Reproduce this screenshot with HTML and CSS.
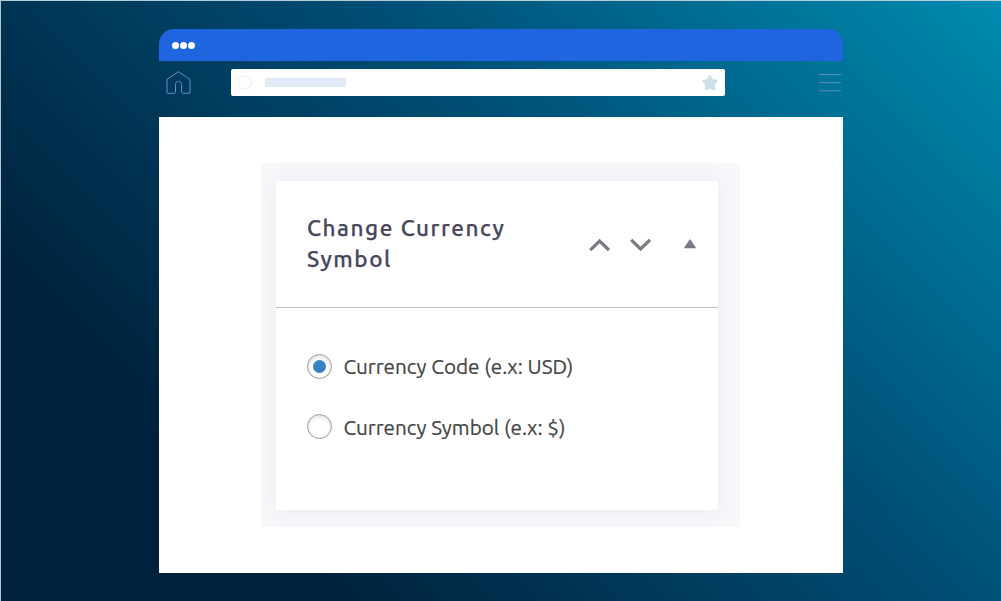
FILE: index.html
```html
<!DOCTYPE html>
<html lang="en">
<head>
<meta charset="utf-8">
<title>Change Currency Symbol</title>
<link rel="stylesheet" href="styles.css">
</head>
<body>
<main class="window">
  <header class="titlebar"><i class="dot"></i><i class="dot"></i><i class="dot"></i></header>
  <nav class="toolbar">
    <svg class="home" width="26" height="24" viewBox="0 0 26 24"><path d="M1 8.4 L12.4 .7 L24 8.4 V21.3 Q24 22.3 23 22.3 H16.6 Q15.6 22.3 15.6 21.3 V13.5 C15.6 9.3 9.5 9.3 9.5 13.5 V21.3 Q9.5 22.3 8.5 22.3 H2 Q1 22.3 1 21.3 Z"/></svg>
    <div class="address">
      <svg class="search" width="16" height="16" viewBox="0 0 16 16"><circle cx="7.7" cy="7.5" r="6.6"/><path d="M12 12 L14.5 14.5"/></svg>
      <span class="url"></span>
      <svg class="star" width="18" height="17" viewBox="0 0 18 17"><path d="M9 1 L11.5 5.6 L16.7 6.6 L13.2 10.6 L14 15.9 L9 14.5 L4 15.9 L4.8 10.6 L1.3 6.6 L6.5 5.6 Z"/></svg>
    </div>
    <svg class="menu" width="22" height="20" viewBox="0 0 22 20"><path d="M0 1.5H22M0 9.7H22M0 17.8H22"/></svg>
  </nav>
  <section class="page">
    <div class="panel">
      <div class="card">
        <div class="card-head">
          <h1 class="title">Change Currency<br>Symbol</h1>
          <div class="actions">
            <svg class="chevron" width="22" height="14" viewBox="0 0 22 14"><path d="M1.2 12.1 L10.6 3 L20 12.1"/></svg>
            <svg class="chevron" width="22" height="14" viewBox="0 0 22 14"><path d="M1.2 1.9 L10.6 11 L20 1.9"/></svg>
            <svg class="toggle" width="14" height="10" viewBox="0 0 14 10"><path d="M7 0 L13.3 9.3 H.7 Z"/></svg>
          </div>
        </div>
        <div class="options">
          <label class="option"><span class="radio checked"></span><span>Currency Code (e.x: USD)</span></label>
          <label class="option"><span class="radio raised"></span><span>Currency Symbol (e.x: $)</span></label>
        </div>
      </div>
    </div>
  </section>
</main>
</body>
</html>
```
FILE: styles.css
```css
* { box-sizing: border-box; }
body {
  margin: 0;
  width: 1001px;
  height: 601px;
  overflow: hidden;
  padding: 28px 0 0 157.5px;
  border-top: 1px solid #b3d0d8;
  border-left: 1px solid #b3c5d0;
  background: linear-gradient(45deg, #00213b 20%, #004d74 60%, #008bb0 100%) border-box;
  font-family: Ubuntu, "Noto Sans", sans-serif;
}
svg { display: block; flex: none; fill: none; }
.window { width: 684.5px; }
.titlebar {
  display: flex;
  align-items: center;
  gap: 1px;
  height: 32px;
  padding-left: 13px;
  border-radius: 15px 15px 0 0;
  background: #1f65e0;
}
.dot { width: 7px; height: 7px; border-radius: 50%; background: #fff; }
.toolbar { display: flex; height: 56px; padding: 8px 2.5px 0 7px; }
.home { margin-top: 2px; stroke: #5e91c6; stroke-width: 1; }
.address {
  display: flex;
  align-items: center;
  width: 493.5px;
  height: 27px;
  margin-left: 39.5px;
  padding: 0 6px;
  border-radius: 2px;
  background: #fff;
}
.search { stroke: #e5ebf8; stroke-width: 1; }
.url { width: 81px; height: 9.5px; margin-left: 12px; background: #dfe9f7; }
.star { margin-left: auto; fill: #cddfe7; stroke: #cddfe7; stroke-width: 1; stroke-linejoin: round; }
.menu { margin: 4px 0 0 auto; stroke: #5b91c5; stroke-width: 1; }
.page { height: 455.5px; padding: 46px 0 0 102.5px; background: #fff; }
.panel {
  width: 479px;
  height: 364px;
  padding: 18px 22px 17px 15px;
  overflow: hidden;
  background: #f8f8fb;
}
.card { height: 329px; background: #fff; box-shadow: 0 0 20px #e9e8f1; }
.card-head {
  display: flex;
  justify-content: space-between;
  height: 127px;
  padding: 31px 21px 0 31px;
  border-bottom: 1px solid #bdbdc7;
}
.title {
  margin: 0;
  color: #47465c;
  font-size: 22.5px;
  font-weight: 500;
  line-height: 31px;
  letter-spacing: 1.55px;
  white-space: nowrap;
  -webkit-text-stroke: .25px #47465c;
}
.actions { display: flex; gap: 19px; padding-top: 26px; }
.chevron { stroke: #797c82; stroke-width: 3.4; }
.toggle { margin: 1px 0 0 12.5px; fill: #797c82; }
.options { display: flex; flex-direction: column; gap: 30px; padding: 43px 0 0 31px; }
.option {
  display: flex;
  align-items: center;
  gap: 11.5px;
  height: 31px;
  color: #444;
  font-size: 20.7px;
  white-space: nowrap;
  -webkit-text-stroke: .2px #444;
}
.radio {
  display: grid;
  place-items: center;
  width: 25px;
  height: 25px;
  border: 1px solid #999b9f;
  border-radius: 50%;
  background: #fff;
  box-shadow: inset 0 2px 4px #dedede;
}
.raised { margin-bottom: 2px; }
.checked::after { content: ""; width: 13px; height: 13px; border-radius: 50%; background: #3582c4; }
```
